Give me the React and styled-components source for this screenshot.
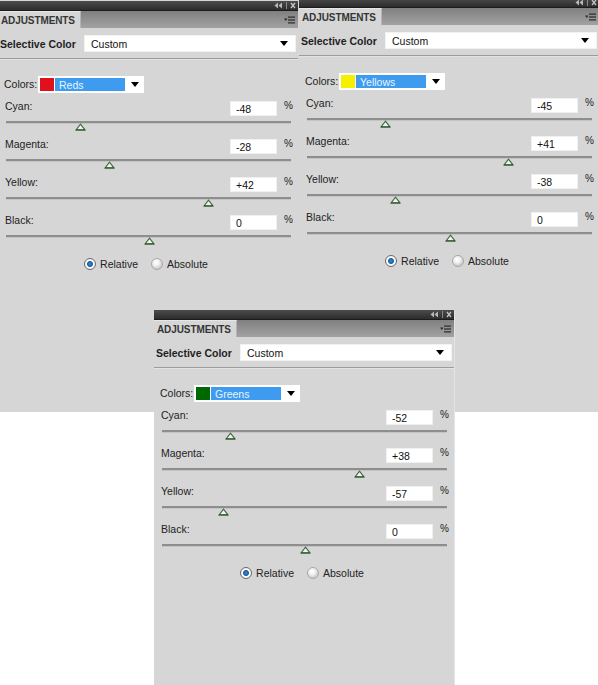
import React from "react";
import styled, {createGlobalStyle} from "styled-components";

const GlobalStyle = createGlobalStyle`
    html, body {
        margin: 0;
        padding: 0;
        background: #ffffff;
    }
    body {
        font-family: "Liberation Sans", Arial, sans-serif;
    }
`;

const Canvas = styled.div`
    position: relative;
    width: 598px;
    height: 685px;
    overflow: hidden;
    background: #ffffff;
`;

const Band = styled.div`
    display: flex;
    align-items: flex-start;
    height: 412px;
    overflow: hidden;
    background: #d6d6d6;
`;

const Panel = styled.section`
    flex-shrink: 0;
    display: flex;
    flex-direction: column;
    width: 300px;
    height: ${p => p.$height}px;
    margin-left: ${p => p.$ml || 0}px;
    margin-top: ${p => p.$mt || 0}px;
    background: #d6d6d6;
    overflow: hidden;
`;

const FloatingPanel = styled(Panel)`
    position: absolute;
    left: 154px;
    top: 310px;
    margin: 0;
    border-right: 1px solid #e4e4e4;
`;

const TitleBar = styled.div`
    display: flex;
    justify-content: flex-end;
    align-items: center;
    height: 10px;
    background: linear-gradient(#4c4c4c, #2c2c2c);
    box-sizing: border-box;
    border-bottom: 1px solid #1c1c1c;
`;

const TabStrip = styled.div`
    display: flex;
    align-items: stretch;
    height: 17px;
    background: linear-gradient(#808080, #a2a2a2);
`;

const Tab = styled.div`
    display: flex;
    align-items: center;
    width: 83px;
    padding-left: 3px;
    box-sizing: border-box;
    background: #d6d6d6;
    border-top: 1px solid #e6e6e6;
    border-right: 1px solid #b4b4b4;
    font-size: 10px;
    font-weight: bold;
    letter-spacing: -0.1px;
    color: #353535;
`;

const MenuButton = styled.div`
    display: flex;
    align-items: center;
    margin-left: auto;
    padding-right: 3px;
`;

const HeaderRow = styled.div`
    display: flex;
    align-items: center;
    height: 17px;
    margin-top: 7px;
`;

const Title = styled.div`
    width: 84px;
    padding-left: 2px;
    font-size: 10.5px;
    font-weight: bold;
    color: #1e1e1e;
    white-space: nowrap;
`;

const Dropdown = styled.div`
    display: flex;
    align-items: center;
    width: 212px;
    height: 17px;
    box-sizing: border-box;
    padding: 0 7px 0 6px;
    background: #ffffff;
    border: 1px solid #f2f2f2;
    font-size: 10.5px;
    color: #111111;
`;

const DropText = styled.span`
    flex: 1;
`;

const Separator = styled.div`
    height: 1px;
    margin-top: 6px;
    background: #9c9c9c;
    border-bottom: 1px solid #e2e2e2;
`;

const ColorsRow = styled.div`
    display: flex;
    align-items: center;
    height: 17px;
    margin-top: 16px;
    padding-left: 6px;
`;

const Label = styled.span`
    font-size: 10.5px;
    line-height: 11px;
    color: #222222;
    white-space: nowrap;
`;

const ColorsLabel = styled(Label)`
    width: 34px;
`;

const ColorSelect = styled.div`
    display: flex;
    align-items: center;
    width: 106px;
    height: 17px;
    box-sizing: border-box;
    padding: 0 5px 0 2px;
    background: #ffffff;
`;

const Swatch = styled.span`
    width: 14px;
    height: 13px;
    background: ${p => p.$color};
`;

const Highlight = styled.span`
    display: flex;
    align-items: center;
    width: 70px;
    height: 13px;
    padding-left: 4px;
    box-sizing: border-box;
    margin-left: 1px;
    background: #3d9cf0;
    font-size: 10.5px;
    color: #eaf4ff;
`;

const SelectArrow = styled.span`
    display: flex;
    margin-left: auto;
`;

const Sliders = styled.div`
    display: flex;
    flex-direction: column;
    margin-top: 8px;
`;

const SliderRow = styled.div`
    display: flex;
    flex-direction: column;
    height: 38px;
    padding: 0 5px 0 7px;
`;

const SliderHead = styled.div`
    display: flex;
    align-items: flex-start;
    justify-content: space-between;
    height: 15px;
`;

const ValueGroup = styled.div`
    display: flex;
    align-items: flex-start;
    gap: 7px;
`;

const ValueBox = styled.div`
    display: flex;
    align-items: center;
    width: 47px;
    height: 15px;
    box-sizing: border-box;
    padding: 1px 0 0 5px;
    background: #ffffff;
    border: 1px solid #f0f0f0;
    font-size: 10.5px;
    color: #111111;
`;

const Percent = styled.span`
    width: 9px;
    font-size: 10px;
    line-height: 10px;
    color: #222222;
`;

const Track = styled.div`
    position: relative;
    height: 2px;
    margin: 5px 2px 0 1px;
    background: #8e8e8e;
    border-bottom: 1px solid #c4c4c4;
`;

const Thumb = styled.svg`
    position: absolute;
    top: 2px;
    width: 11px;
    height: 8px;
    margin-left: -5px;
`;

const RadioRow = styled.div`
    display: flex;
    align-items: center;
    justify-content: center;
    gap: 13px;
    height: 22px;
    margin-left: -4px;
`;

const RadioOption = styled.label`
    display: flex;
    align-items: center;
    gap: 4px;
    font-size: 10.5px;
    color: #222222;
`;

const RadioDot = styled.span`
    width: 12px;
    height: 12px;
    box-sizing: border-box;
    border-radius: 50%;
    border: 1px solid ${p => (p.$checked ? "#6a6a6a" : "#a8a8a8")};
    background: ${p =>
        p.$checked
            ? "radial-gradient(circle, #2f8fd8 0, #1a5f9c 2.5px, #ffffff 3.5px, #e8e8e8 6px)"
            : "radial-gradient(circle at 40% 35%, #ffffff 0, #f2f2f2 3px, #cfcfcf 6px)"};
`;

const WindowControls = () => (
    <svg width="24" height="7" viewBox="0 0 24 7">
        <path d="M4 0.5 L0.5 3.5 L4 6.5 Z M8 0.5 L4.5 3.5 L8 6.5 Z" fill="#b8b8b8" />
        <rect x="12" y="0" width="1" height="7" fill="#8a8a8a" />
        <path d="M17 1 L21 6 M21 1 L17 6" stroke="#c4c4c4" strokeWidth="1.3" />
    </svg>
);

const MenuIcon = () => (
    <svg width="11" height="8" viewBox="0 0 11 8">
        <path d="M0 2.5 L3.5 2.5 L1.75 5 Z" fill="#2a2a2a" />
        <rect x="4" y="0.5" width="7" height="1.2" fill="#2a2a2a" />
        <rect x="4" y="3.4" width="7" height="1.2" fill="#2a2a2a" />
        <rect x="4" y="6.3" width="7" height="1.2" fill="#2a2a2a" />
    </svg>
);

const DownArrow = () => (
    <svg width="8" height="5" viewBox="0 0 8 5">
        <path d="M0 0 L8 0 L4 5 Z" fill="#000000" />
    </svg>
);

const formatValue = v => (v > 0 ? `+${v}` : `${v}`);

const CHANNELS = ["Cyan:", "Magenta:", "Yellow:", "Black:"];

const PanelBody = ({swatch, colorName, values}) => (
    <>
        <TitleBar>
            <WindowControls />
        </TitleBar>
        <TabStrip>
            <Tab>ADJUSTMENTS</Tab>
            <MenuButton>
                <MenuIcon />
            </MenuButton>
        </TabStrip>
        <HeaderRow>
            <Title>Selective Color</Title>
            <Dropdown>
                <DropText>Custom</DropText>
                <DownArrow />
            </Dropdown>
        </HeaderRow>
        <Separator />
        <ColorsRow>
            <ColorsLabel>Colors:</ColorsLabel>
            <ColorSelect>
                <Swatch $color={swatch} />
                <Highlight>{colorName}</Highlight>
                <SelectArrow>
                    <DownArrow />
                </SelectArrow>
            </ColorSelect>
        </ColorsRow>
        <Sliders>
            {CHANNELS.map((name, i) => (
                <SliderRow key={name}>
                    <SliderHead>
                        <Label>{name}</Label>
                        <ValueGroup>
                            <ValueBox>{formatValue(values[i])}</ValueBox>
                            <Percent>%</Percent>
                        </ValueGroup>
                    </SliderHead>
                    <Track>
                        <Thumb viewBox="0 0 11 8" style={{left: `${(values[i] + 100) / 2}%`}}>
                            <path d="M1 7 L5.5 1.2 L10 7 Z" fill="#eef5ea" stroke="#3f6b3f" strokeWidth="1.2" />
                            <rect x="1" y="6.3" width="9" height="1.2" fill="#2f522f" />
                        </Thumb>
                    </Track>
                </SliderRow>
            ))}
        </Sliders>
        <RadioRow>
            <RadioOption>
                <RadioDot $checked />
                Relative
            </RadioOption>
            <RadioOption>
                <RadioDot />
                Absolute
            </RadioOption>
        </RadioRow>
    </>
);

const App = () => {
    return (
        <>
            <GlobalStyle />
            <Canvas>
                <Band>
                    <Panel $height={411} $ml={-2} $mt={1}>
                        <PanelBody swatch="#e0101c" colorName="Reds" values={[-48, -28, 42, 0]} />
                    </Panel>
                    <Panel $height={414} $ml={1} $mt={-2}>
                        <PanelBody swatch="#f4f000" colorName="Yellows" values={[-45, 41, -38, 0]} />
                    </Panel>
                </Band>
                <FloatingPanel $height={375}>
                    <PanelBody swatch="#006800" colorName="Greens" values={[-52, 38, -57, 0]} />
                </FloatingPanel>
            </Canvas>
        </>
    );
};

export default App;
